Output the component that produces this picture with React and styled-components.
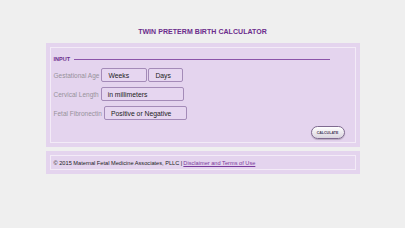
import React from 'react';
import styled, { createGlobalStyle } from 'styled-components';

const Global = createGlobalStyle`
  html, body {
    margin: 0;
    padding: 0;
    background: #efefef;
    font-family: "Liberation Sans", Arial, sans-serif;
  }
`;

const Page = styled.div`
  width: 314px;
  margin: 0 auto;
  padding-top: 27px;
`;

const Title = styled.h1`
  margin: 0 0 6px;
  text-align: center;
  font-size: 7px;
  font-weight: bold;
  color: #6b2c8c;
  letter-spacing: 0.05px;
  line-height: 10px;
`;

const Panel = styled.div`
  background: #e4d4ee;
  padding: 4px;
  margin-bottom: ${p => p.gap || 0}px;
`;

const Inner = styled.div`
  border: 1px solid #f3ebf7;
  padding: ${p => p.pad};
  height: ${p => p.h}px;
  box-sizing: border-box;
`;

const Legend = styled.div`
  display: flex;
  align-items: center;
  gap: 4px;
  margin-right: 25px;
  font-size: 5.5px;
  font-weight: bold;
  color: #6b2c8c;
  height: 10px;
`;

const Rule = styled.div`
  flex: 1;
  height: 1px;
  background: #8c54aa;
`;

const Row = styled.div`
  display: flex;
  align-items: center;
  gap: 1px;
  margin-top: ${p => p.mt}px;
`;

const Label = styled.span`
  font-size: 6.5px;
  color: #96929a;
  margin-right: 1px;
`;

const Field = styled.div`
  width: ${p => p.w}px;
  height: 14px;
  box-sizing: border-box;
  border: 1px solid #a48bb8;
  border-radius: 2px;
  background: #e6d6f0;
  font-size: 6.8px;
  color: #222;
  display: flex;
  align-items: center;
  padding-left: 6px;
`;

const Actions = styled.div`
  display: flex;
  justify-content: flex-end;
  margin-top: 6px;
  margin-right: 10px;
`;

const Button = styled.div`
  width: 34px;
  height: 13px;
  box-sizing: border-box;
  border-radius: 7px;
  border: 1px solid #7f6a90;
  background: linear-gradient(#ffffff, #d9d4de);
  box-shadow: 0 1px 1px rgba(0,0,0,0.2);
  font-size: 3.6px;
  font-weight: bold;
  color: #4a3a5a;
  display: flex;
  align-items: center;
  justify-content: center;
`;

const Footer = styled.div`
  font-size: 5.65px;
  color: #222;
  display: flex;
  align-items: center;
  height: 100%;
`;

const Link = styled.a`
  color: #7a3a9c;
  text-decoration: underline;
  margin-left: 1px;
`;

export default function App() {
  return (
    <>
      <Global />
      <Page>
        <Title>TWIN PRETERM BIRTH CALCULATOR</Title>
        <Panel gap={4}>
          <Inner pad="6px 0 0 3px" h={96}>
            <Legend>INPUT<Rule /></Legend>
            <Row mt={4}>
              <Label>Gestational Age</Label>
              <Field w={46}>Weeks</Field>
              <Field w={35}>Days</Field>
            </Row>
            <Row mt={5}>
              <Label>Cervical Length</Label>
              <Field w={83}>in millimeters</Field>
            </Row>
            <Row mt={5}>
              <Label>Fetal Fibronectin</Label>
              <Field w={83}>Positive or Negative</Field>
            </Row>
            <Actions>
              <Button>CALCULATE</Button>
            </Actions>
          </Inner>
        </Panel>
        <Panel>
          <Inner pad="0 0 0 3px" h={15}>
            <Footer>
              © 2015 Maternal Fetal Medicine Associates, PLLC | <Link>Disclaimer and Terms of Use</Link>
            </Footer>
          </Inner>
        </Panel>
      </Page>
    </>
  );
}
